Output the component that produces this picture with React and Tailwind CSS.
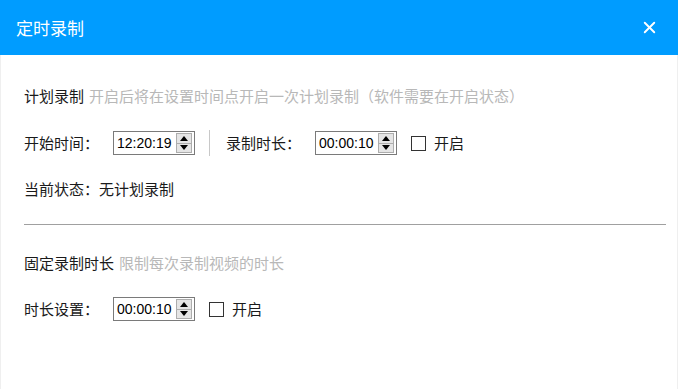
import { X } from 'lucide-react'

const cjk = { fontFamily: '"Microsoft YaHei", "Noto Sans CJK SC", sans-serif' }

// Time input with the little up/down spin buttons
function SpinBox({ value }) {
  return (
    <div className="flex h-[24px] w-[82px] items-center border border-[#7a7a7a] bg-white pl-[3px] pr-[2px]">
      <span className="flex-1 text-[14px] leading-none text-black" style={{ fontFamily: '"Liberation Sans", Arial, sans-serif' }}>
        {value}
      </span>
      <div className="flex h-[20px] w-[16px] flex-col">
        <div className="flex flex-1 items-center justify-center border border-[#adadad] bg-[#e5e5e5]">
          <svg width="8" height="5" viewBox="0 0 8 5"><path d="M0 5 L4 0 L8 5 Z" fill="#000" /></svg>
        </div>
        <div className="flex flex-1 items-center justify-center border border-t-0 border-[#adadad] bg-[#e5e5e5]">
          <svg width="8" height="5" viewBox="0 0 8 5"><path d="M0 0 L4 5 L8 0 Z" fill="#000" /></svg>
        </div>
      </div>
    </div>
  )
}

function Check({ label }) {
  return (
    <div className="flex items-center gap-[8px]">
      <div className="h-[15px] w-[15px] border border-[#333] bg-white" />
      <span className="text-[15px] text-[#1a1a1a]">{label}</span>
    </div>
  )
}

export default function App() {
  return (
    <div className="flex h-[389px] w-[678px] flex-col bg-white" style={cjk}>
      {/* Header */}
      <div className="flex h-[55px] shrink-0 items-center justify-between bg-[#009cff] pl-[16px] pr-[19px]">
        <span className="text-[17px] text-white">定时录制</span>
        <X className="h-[19px] w-[19px] text-white" strokeWidth={2.4} />
      </div>

      {/* Body */}
      <div className="flex flex-1 flex-col border-x border-[#efefef] pl-[23px] pr-[11px] text-[15px] text-[#1a1a1a]">
        <div className="mt-[29px] flex h-[24px] items-center">
          <span>计划录制</span>
          <span className="ml-[5px] text-[#b8b8b8]">开启后将在设置时间点开启一次计划录制（软件需要在开启状态）</span>
        </div>

        <div className="mt-[22px] flex h-[26px] items-center">
          <span className="w-[89px]">开始时间：</span>
          <SpinBox value="12:20:19" />
          <div className="ml-[14px] mr-[16px] h-[26px] w-px bg-[#c8c8c8]" />
          <span className="w-[89px]">录制时长：</span>
          <SpinBox value="00:00:10" />
          <div className="ml-[14px]">
            <Check label="开启" />
          </div>
        </div>

        <div className="mt-[21px] flex h-[24px] items-center">
          <span>当前状态：无计划录制</span>
        </div>

        <div className="mt-[23px] h-px bg-[#a0a0a0]" />

        <div className="mt-[26px] flex h-[24px] items-center">
          <span>固定录制时长</span>
          <span className="ml-[5px] text-[#b8b8b8]">限制每次录制视频的时长</span>
        </div>

        <div className="mt-[21px] flex h-[26px] items-center">
          <span className="w-[89px]">时长设置：</span>
          <SpinBox value="00:00:10" />
          <div className="ml-[14px]">
            <Check label="开启" />
          </div>
        </div>
      </div>
    </div>
  )
}
